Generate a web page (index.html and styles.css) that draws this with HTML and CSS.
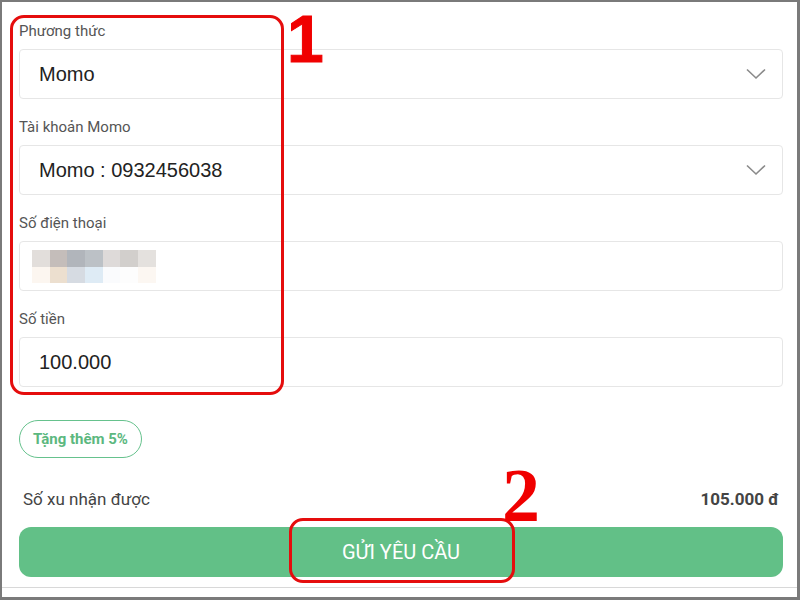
FILE: index.html
```html
<!DOCTYPE html>
<html lang="vi">
	<head>
		<meta charset="UTF-8" />
		<meta name="viewport" content="width=device-width, initial-scale=1.0" />
		<title>Nạp xu</title>
		<link rel="stylesheet" href="styles.css">
	</head>
	<body>
		<div class="frame">
			<form class="withdraw-form">
				<div class="field">
					<label class="field-label">Phương thức</label>
					<div class="field-box select">
						<span class="field-value">Momo</span>
						<svg class="chevron" width="20" height="12" viewBox="0 0 20 12"><path d="M1 1.5 L10 10 L19 1.5" fill="none" stroke="#8a8a8a" stroke-width="1.6"/></svg>
					</div>
				</div>
				<div class="field">
					<label class="field-label">Tài khoản Momo</label>
					<div class="field-box select">
						<span class="field-value">Momo : 0932456038</span>
						<svg class="chevron" width="20" height="12" viewBox="0 0 20 12"><path d="M1 1.5 L10 10 L19 1.5" fill="none" stroke="#8a8a8a" stroke-width="1.6"/></svg>
					</div>
				</div>
				<div class="field">
					<label class="field-label">Số điện thoại</label>
					<div class="field-box">
						<div class="blur-grid">
							<span style="background:#e2dedb"></span><span style="background:#c4bdba"></span><span style="background:#b1b5bb"></span><span style="background:#bcc1c6"></span><span style="background:#dedad9"></span><span style="background:#d2cfcc"></span><span style="background:#e4e1de"></span>
							<span style="background:#fcf6f0"></span><span style="background:#ecdfcf"></span><span style="background:#d6dbe2"></span><span style="background:#deebf5"></span><span style="background:#fafbfd"></span><span style="background:#fdfdfd"></span><span style="background:#fcf7f2"></span>
						</div>
					</div>
				</div>
				<div class="field">
					<label class="field-label">Số tiền</label>
					<div class="field-box">
						<span class="field-value">100.000</span>
					</div>
				</div>

				<div class="bonus-row">
					<span class="bonus-pill">Tặng thêm 5%</span>
				</div>

				<div class="summary-row">
					<span>Số xu nhận được</span>
					<strong>105.000 đ</strong>
				</div>

				<button type="button" class="submit-btn">GỬI YÊU CẦU</button>
			</form>
			<div class="bottom-line"></div>

			<!-- khung chú thích -->
			<div class="mark mark-fields"></div>
			<div class="mark-num num-1">1</div>
			<div class="mark mark-button"></div>
			<div class="mark-num num-2">2</div>
		</div>
	</body>
</html>
```

FILE: styles.css
```css
* {
	padding: 0;
	margin: 0;
	box-sizing: border-box;
}
body {
	font-family: Roboto, "Liberation Sans", Arial, sans-serif;
	background: #fff;
}
.frame {
	position: relative;
	width: 800px;
	height: 600px;
	border: 2px solid #7a7a7a;
	border-right-width: 3px;
	border-bottom-width: 3px;
	overflow: hidden;
}
.withdraw-form {
	display: flex;
	flex-direction: column;
	padding: 19px 14px 0 17px;
}
.field {
	display: flex;
	flex-direction: column;
	gap: 8px;
	margin-bottom: 18px;
}
.field:nth-child(4) {
	margin-bottom: 33px;
}
.field-label {
	font-size: 15px;
	line-height: 20px;
	color: #555;
}
.field-box {
	display: flex;
	align-items: center;
	justify-content: space-between;
	height: 50px;
	padding: 0 16px 0 19px;
	border: 1px solid #e6e6e6;
	border-radius: 4px;
}
.field-value {
	font-family: "Liberation Sans", Arial, sans-serif;
	font-size: 20px;
	color: #222;
}
.chevron {
	display: block;
}
.blur-grid {
	display: grid;
	grid-template-columns: repeat(7, 17.7px);
	grid-template-rows: 17px 16px;
	margin-left: -7px;
}
.bonus-row {
	display: flex;
}
.bonus-pill {
	height: 38px;
	padding: 0 13px;
	border: 1px solid #66c28d;
	border-radius: 19px;
	font-size: 15px;
	font-weight: 700;
	line-height: 36px;
	color: #5cb87f;
}
.summary-row {
	display: flex;
	justify-content: space-between;
	align-items: center;
	height: 20px;
	margin-top: 31px;
	padding: 0 4px 0 4px;
	color: #444;
}
.summary-row span {
	font-size: 17px;
}
.summary-row strong {
	font-size: 17px;
}
.submit-btn {
	height: 50px;
	margin-top: 18px;
	border: none;
	border-radius: 12px;
	background: #62c087;
	color: #fff;
	font-family: Roboto, "Liberation Sans", Arial, sans-serif;
	font-size: 20px;
}
.bottom-line {
	height: 1px;
	margin-top: 10px;
	background: #d8d8d8;
}
.mark {
	position: absolute;
	border: 3px solid #e50d0d;
	border-radius: 14px;
}
.mark-fields {
	left: 8px;
	top: 13px;
	width: 274px;
	height: 380px;
}
.mark-button {
	left: 287px;
	top: 516px;
	width: 226px;
	height: 65px;
}
.mark-num {
	position: absolute;
	color: #f00000;
	font-weight: 700;
	line-height: 1;
}
.num-1 {
	left: 285px;
	top: 4px;
	font-family: "Liberation Sans", Arial, sans-serif;
	font-size: 66px;
	-webkit-text-stroke: 1px #f00000;
}
.num-2 {
	left: 500px;
	top: 455px;
	font-family: "Liberation Serif", "Times New Roman", serif;
	font-size: 76px;
}
```
